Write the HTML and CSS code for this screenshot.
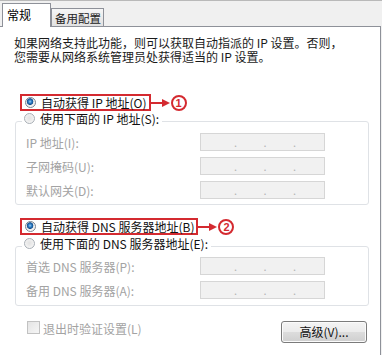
FILE: index.html
```html
<!DOCTYPE html>
<html lang="zh-CN">
<head>
<meta charset="utf-8">
<title>IPv4 属性</title>
<link rel="stylesheet" href="styles.css">
</head>
<body>
<div class="dialog">
  <div class="tabs">
    <div class="tab tab-active">常规</div>
    <div class="tab tab-idle">备用配置</div>
  </div>
  <div class="panel">
    <p class="desc">如果网络支持此功能，则可以获取自动指派的 IP 设置。否则，<br>您需要从网络系统管理员处获得适当的 IP 设置。</p>

    <div class="callout callout-ip">
      <div class="redbox">
        <span class="radio radio-on"></span>
        <span class="opt">自动获得 IP 地址(O)</span>
      </div>
      <svg class="arrow" width="19" height="10" viewBox="0 0 19 10"><line x1="0" y1="5" x2="12" y2="5" stroke="#d42a30" stroke-width="2"/><polygon points="11,1 19,5 11,9" fill="#d42a30"/></svg>
      <span class="num">1</span>
    </div>

    <div class="group group-ip">
      <div class="head">
        <span class="radio radio-off"></span>
        <span class="opt">使用下面的 IP 地址(S):</span>
      </div>
      <div class="row"><span class="lbl">IP 地址(I):</span><span class="ipbox"><span>.</span><span>.</span><span>.</span></span></div>
      <div class="row"><span class="lbl">子网掩码(U):</span><span class="ipbox"><span>.</span><span>.</span><span>.</span></span></div>
      <div class="row"><span class="lbl">默认网关(D):</span><span class="ipbox"><span>.</span><span>.</span><span>.</span></span></div>
    </div>

    <div class="callout callout-dns">
      <div class="redbox">
        <span class="radio radio-on"></span>
        <span class="opt">自动获得 DNS 服务器地址(B)</span>
      </div>
      <svg class="arrow" width="19" height="10" viewBox="0 0 19 10"><line x1="0" y1="5" x2="12" y2="5" stroke="#d42a30" stroke-width="2"/><polygon points="11,1 19,5 11,9" fill="#d42a30"/></svg>
      <span class="num">2</span>
    </div>

    <div class="group group-dns">
      <div class="head">
        <span class="radio radio-off"></span>
        <span class="opt">使用下面的 DNS 服务器地址(E):</span>
      </div>
      <div class="row"><span class="lbl">首选 DNS 服务器(P):</span><span class="ipbox"><span>.</span><span>.</span><span>.</span></span></div>
      <div class="row"><span class="lbl">备用 DNS 服务器(A):</span><span class="ipbox"><span>.</span><span>.</span><span>.</span></span></div>
    </div>

    <div class="footer">
      <div class="check-row">
        <span class="checkbox"></span>
        <span class="check-lbl">退出时验证设置(L)</span>
      </div>
      <div class="btn">高级(V)...</div>
    </div>
  </div>
</div>
</body>
</html>
```

FILE: styles.css
```css
html, body {
  margin: 0;
  padding: 0;
  background: #f0f0f0;
}

body {
  font-family: "Noto Sans CJK SC", "Noto Sans", sans-serif;
  font-size: 12px;
  color: #1a1a1a;
}

.dialog {
  width: 382px;
  height: 355px;
  background: #f0f0f0;
  border-top: 1px solid #b9b9b9;
  box-sizing: border-box;
  overflow: hidden;
}

.tabs {
  display: flex;
  align-items: flex-end;
  height: 26px;
  padding-left: 2px;
  border-bottom: 1px solid #8e9199;
  box-sizing: border-box;
  width: 381px;
}

.tab {
  box-sizing: border-box;
  border: 1px solid #8e9199;
  border-bottom: none;
  display: flex;
  align-items: center;
  line-height: 14px;
  white-space: nowrap;
}

.tab-active {
  width: 49px;
  height: 24px;
  margin-bottom: -1px;
  background: #ffffff;
  padding-left: 4px;
  padding-bottom: 1px;
  color: #000;
}

.tab-idle {
  width: 53px;
  height: 18px;
  background: linear-gradient(#f6f6f6, #e2e2e2);
  padding-left: 3px;
  font-size: 11.5px;
  color: #222;
}

.panel {
  width: 381px;
  height: 328px;
  box-sizing: border-box;
  background: #ffffff;
  border-right: 1px solid #8e9199;
  padding-top: 9px;
}

.desc {
  margin: 0 0 0 14px;
  line-height: 14px;
  white-space: nowrap;
  color: #1a1a1a;
}

.callout {
  display: flex;
  align-items: center;
  margin-left: 20px;
  height: 17px;
}

.callout-ip {
  margin-top: 30px;
}

.callout-dns {
  margin-top: 13px;
}

.redbox {
  box-sizing: border-box;
  height: 17px;
  border: 2px solid #d42a30;
  display: flex;
  align-items: center;
  padding: 0 2px 0 2px;
  gap: 5px;
}

.opt {
  line-height: 13px;
  white-space: nowrap;
  color: #111;
}

.arrow {
  display: block;
}

.num {
  box-sizing: border-box;
  width: 16px;
  height: 16px;
  border: 2px solid #d42a30;
  border-radius: 50%;
  color: #d42a30;
  font-weight: bold;
  font-size: 11px;
  line-height: 12px;
  text-align: center;
  margin-left: 1px;
  font-family: "Liberation Sans", sans-serif;
}

.radio {
  box-sizing: border-box;
  width: 11px;
  height: 11px;
  border-radius: 50%;
  flex: none;
  margin-left: 1px;
}

.radio-on {
  border: 1px solid #7a8592;
  background: radial-gradient(circle at 45% 40%, #9cd0f5 0, #2f7fc6 1.6px, #14508f 3px, #e8e8e8 3.6px, #f6f6f6 5px);
}

.radio-off {
  border: 1px solid #a8aeb5;
  background: radial-gradient(circle at 50% 45%, #e2e2e2 0, #ececec 3px, #f7f7f7 5px);
}

.group {
  margin-left: 15px;
  width: 354px;
  box-sizing: border-box;
  border: 1px solid #dfe2e6;
  border-radius: 3px;
  padding-left: 10px;
}

.group-ip {
  margin-top: 10px;
  padding-bottom: 5px;
}

.group-dns {
  margin-top: 11px;
  padding-bottom: 6px;
}

.head {
  display: flex;
  align-items: center;
  gap: 5px;
  width: fit-content;
  height: 13px;
  margin-top: -10px;
  margin-left: -4px;
  padding: 0 3px 0 1px;
  background: #ffffff;
}

.row {
  display: grid;
  grid-template-columns: 174px 125px;
  align-items: center;
  height: 18px;
  margin-top: 6px;
}

.group .head + .row {
  margin-top: 8px;
}

.group-dns .head + .row {
  margin-top: 7px;
}

.lbl {
  color: #a3a3a3;
  line-height: 13px;
  white-space: nowrap;
}

.ipbox {
  box-sizing: border-box;
  height: 18px;
  border: 1px solid #d6d6d6;
  background: #f1f1f1;
  display: flex;
  justify-content: space-between;
  padding: 0 28px 0 33px;
  color: #b4b4b4;
  line-height: 16px;
  font-size: 11px;
}

.footer {
  display: flex;
  justify-content: space-between;
  align-items: flex-start;
  margin-top: 15px;
  padding-left: 27px;
  padding-right: 13px;
}

.check-row {
  display: flex;
  align-items: center;
  gap: 3px;
  height: 13px;
}

.checkbox {
  box-sizing: border-box;
  width: 13px;
  height: 13px;
  border: 1px solid #c2c2c2;
  background: linear-gradient(135deg, #e4e4e4, #f6f6f6);
  flex: none;
}

.check-lbl {
  color: #a3a3a3;
  line-height: 13px;
  padding-top: 2px;
}

.btn {
  box-sizing: border-box;
  width: 86px;
  height: 22px;
  border: 1px solid #7b7b7b;
  border-radius: 3px;
  background: linear-gradient(#f4f4f4 0, #ebebeb 48%, #dcdcdc 52%, #cfcfcf 100%);
  box-shadow: inset 0 0 0 1px #fbfbfb;
  display: flex;
  align-items: center;
  justify-content: center;
  color: #111;
  line-height: 14px;
}
```
